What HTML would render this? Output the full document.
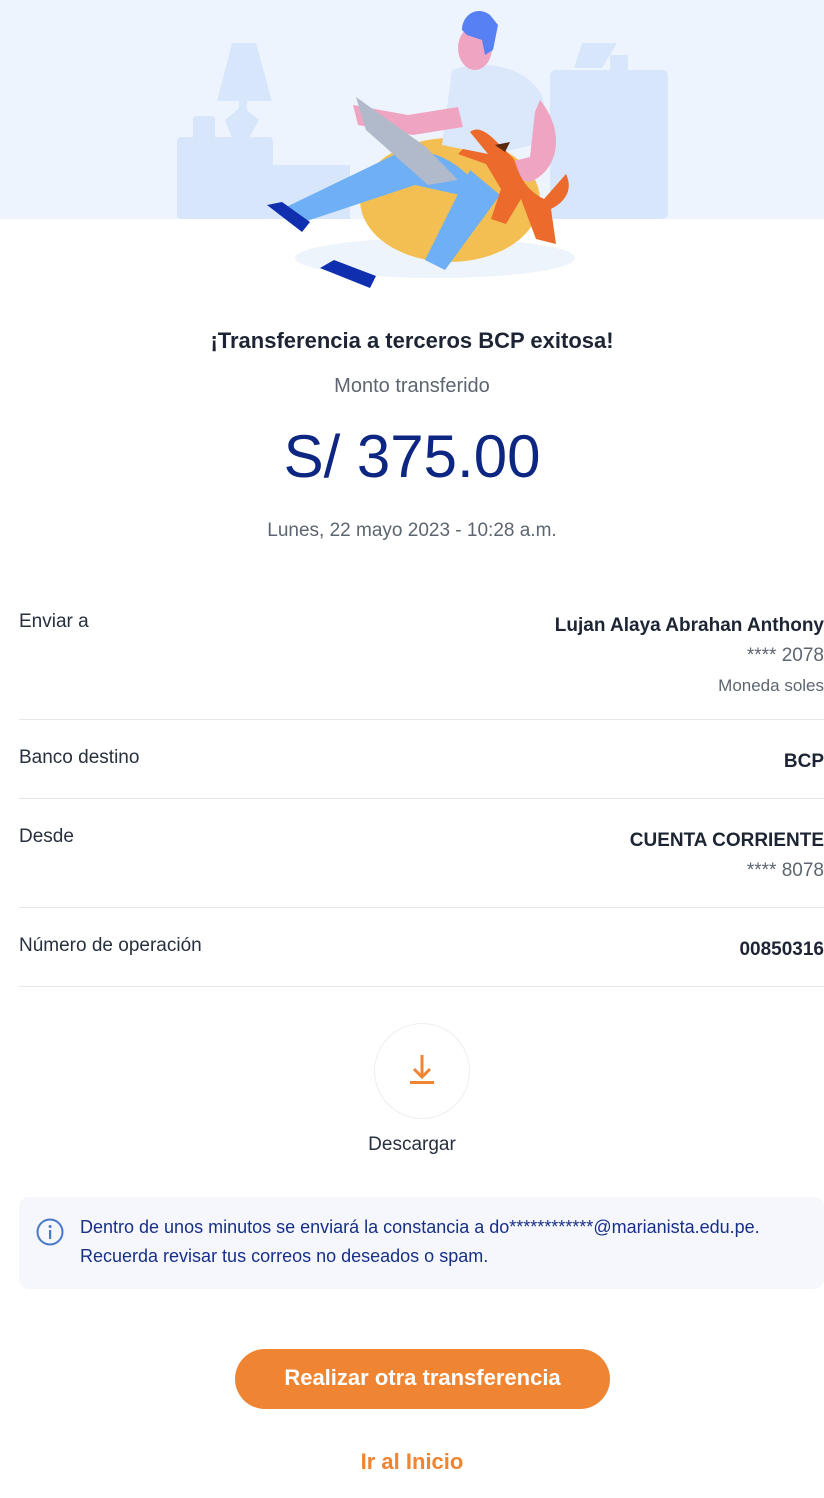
<!DOCTYPE html>
<html><head><meta charset="utf-8"><style>
*{margin:0;padding:0;box-sizing:border-box}
body{width:824px;height:1498px;background:#fff;font-family:"Liberation Sans",sans-serif;color:#1d2433;position:relative;overflow:hidden}
.abs{position:absolute}
.c{position:absolute;left:0;width:824px;text-align:center;white-space:nowrap}
.row{position:absolute;left:19px;width:805px;font-size:19px}
.row .l{position:absolute;left:0;top:0;color:#27303f}
.row .r{position:absolute;right:0;top:0;text-align:right;line-height:30px}
.line{position:absolute;left:19px;width:805px;height:1px;background:#e6e8ec}
b{font-weight:700;color:#1d2433}
.g{color:#5d6570}
</style></head><body>
<div class="abs" style="left:0;top:0;width:824px;height:219px;background:#eef4fe"></div>
<svg class="abs" style="left:170px;top:0" width="500" height="300" viewBox="0 0 500 300">
 <g fill="#d7e6fb">
  <path d="M62 43h24l16 58H47z"/><rect x="69" y="101" width="8" height="10"/><path d="M55 120l17-14 17 14-10 18H62z"/>
  <rect x="7" y="137" width="96" height="82" rx="4"/><rect x="23" y="116" width="22" height="25" rx="3"/><rect x="100" y="165" width="80" height="54"/>
  <rect x="380" y="70" width="118" height="149" rx="6"/><path d="M412 43h35l-15 25h-28z"/><rect x="440" y="55" width="18" height="20"/>
 </g>
 <ellipse cx="265" cy="258" rx="140" ry="20" fill="#eef4fb"/>
 <ellipse cx="280" cy="200" rx="90" ry="62" fill="#f4bf52"/>
 <path d="M282 70c25-10 70-8 90 25l10 45-60 15-50-10z" fill="#dbe7fb"/>
 <path d="M370 100c25 30 20 70-10 82l-25-5 5-15 20-5 5-45z" fill="#efa5c1"/>
 <path d="M183 105l5 20 55 10 50-8-5-20-50 8z" fill="#efa5c1"/>
 <path d="M300 170l-45 90 20 10 55-75z" fill="#6eaff6"/>
 <path d="M230 152c25-5 50 5 70 25l-10 18-45-10-120 40-15-15z" fill="#6eaff6"/>
 <path d="M97 205l35 27 8-10-28-20z" fill="#102fae"/><path d="M150 268l50 20 6-12-42-16z" fill="#102fae"/>
 <ellipse cx="305" cy="48" rx="17" ry="22" fill="#efa5c1"/>
 <path d="M292 30c0-15 15-25 28-15l8 10-5 25-8 5-3-15-15-5z" fill="#5680f3"/>
 <path d="M186 97l70 50 32 33-30 5-62-55z" fill="#b0bacb"/>
 <path d="M300 132c10-8 22 5 32 15l12 12c5 15 10 30 30 40l22-25c5 10 5 25-15 35l5 35-20-5-15-40-15 25-15-5 10-30-15-25-28-10 5-5 25 5z" fill="#eb6a2c"/>
 <path d="M325 145l15-3-5 10z" fill="#5a2a10"/>
</svg>
<div class="c" style="top:328px;font-size:22px;font-weight:700;color:#1d2433">¡Transferencia a terceros BCP exitosa!</div>
<div class="c" style="top:375px;font-size:20px;color:#5d6570">Monto transferido</div>
<div class="c" style="top:422px;font-size:60px;color:#0d2682">S/ 375.00</div>
<div class="c" style="top:520px;font-size:19px;color:#5d6570">Lunes, 22 mayo 2023 - 10:28 a.m.</div>

<div class="row" style="top:611px"><span class="l">Enviar a</span><div class="r"><b>Lujan Alaya Abrahan Anthony</b><br><span class="g">**** 2078</span><br><span class="g" style="font-size:17px">Moneda soles</span></div></div>
<div class="line" style="top:719px"></div>
<div class="row" style="top:747px"><span class="l">Banco destino</span><div class="r"><b>BCP</b></div></div>
<div class="line" style="top:798px"></div>
<div class="row" style="top:826px"><span class="l">Desde</span><div class="r"><b>CUENTA CORRIENTE</b><br><span class="g">**** 8078</span></div></div>
<div class="line" style="top:907px"></div>
<div class="row" style="top:935px"><span class="l">Número de operación</span><div class="r"><b>00850316</b></div></div>
<div class="line" style="top:986px"></div>

<div class="abs" style="left:374px;top:1023px;width:96px;height:96px;border-radius:50%;border:1px solid #eceef1;background:#fff"></div>
<svg class="abs" style="left:408px;top:1052px" width="28" height="34" viewBox="0 0 28 34"><path d="M14 3v22M6 17l8 8 8-8" stroke="#ef8432" stroke-width="3" fill="none"/><rect x="2" y="29" width="24" height="3" fill="#ef8432"/></svg>
<div class="c" style="top:1134px;font-size:19px;color:#27303f">Descargar</div>

<div class="abs" style="left:19px;top:1197px;width:805px;height:92px;background:#f5f7fc;border-radius:10px"></div>
<svg class="abs" style="left:35px;top:1217px" width="30" height="30" viewBox="0 0 30 30"><circle cx="15" cy="15" r="12.5" stroke="#4a78c8" stroke-width="2" fill="none"/><rect x="14" y="13" width="2.2" height="9" fill="#4a78c8"/><circle cx="15.1" cy="9.5" r="1.5" fill="#4a78c8"/></svg>
<div class="abs" style="left:80px;top:1213px;font-size:18px;line-height:29px;color:#172f88;white-space:nowrap">Dentro de unos minutos se enviará la constancia a do************@marianista.edu.pe.<br>Recuerda revisar tus correos no deseados o spam.</div>

<div class="abs" style="left:235px;top:1349px;width:375px;height:60px;border-radius:30px;background:#ef8432;color:#fff;font-size:22px;font-weight:700;text-align:center;line-height:58px">Realizar otra transferencia</div>
<div class="c" style="top:1449px;font-size:22px;font-weight:700;color:#ef8432">Ir al Inicio</div>
</body></html>
